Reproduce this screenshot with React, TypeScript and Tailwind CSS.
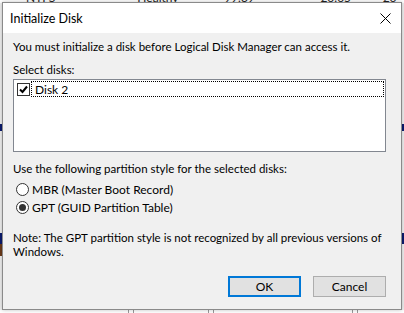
import { useState } from "react";

const FONT = "font-['Lato','Liberation_Sans',sans-serif]";

function CloseGlyph() {
  return (
    <svg width="11" height="11" viewBox="0 0 11 11">
      <path d="M0.5 0.5 L10.5 10.5 M10.5 0.5 L0.5 10.5" stroke="#000" strokeWidth="1" fill="none" />
    </svg>
  );
}

function Radio({ checked, label, onClick }: { checked: boolean; label: string; onClick: () => void }) {
  return (
    <div className="flex h-[18px] items-center pl-[3px]" onClick={onClick}>
      <span className="flex h-[13px] w-[13px] items-center justify-center rounded-full border border-[#333] bg-white">
        {checked && <span className="h-[7px] w-[7px] rounded-full bg-[#333]" />}
      </span>
      <span className="ml-[3px] leading-[15px]">{label}</span>
    </div>
  );
}

export default function App() {
  const [style, setStyle] = useState<"mbr" | "gpt">("gpt");
  const [checked, setChecked] = useState(true);

  return (
    <div className={`relative h-[313px] w-[404px] overflow-hidden bg-white text-black ${FONT}`}>
      {/* disk management window behind the dialog */}
      <div className="flex h-[3px] overflow-hidden text-[12px] text-[#222]">
        <span className="-mt-[10px] ml-[26px] leading-[15px]">NTFS</span>
        <span className="-mt-[10px] ml-[82px] leading-[15px]">Healthy (B...</span>
        <span className="-mt-[10px] ml-[36px] leading-[15px]">99.39 GB</span>
        <span className="-mt-[10px] ml-[56px] leading-[15px]">20.05 GB</span>
        <span className="-mt-[10px] ml-[22px] leading-[15px]">20 %</span>
      </div>
      <div className="flex h-[307px]">
        <div className="flex w-[2px] flex-col bg-[#f0f0f0]">
          <div className="h-[121px]" />
          <div className="h-[7px] bg-[#0a1a6e]" />
          <div className="h-[102px]" />
          <div className="h-[11px] bg-[#0a1a6e]" />
          <div className="h-[12px] bg-[#6b3a1a]" />
        </div>
        <div className="flex-1" />
        <div className="flex w-[2px] flex-col bg-[#f0f0f0]">
          <div className="h-[121px]" />
          <div className="h-[7px] bg-[#0a1a6e]" />
          <div className="h-[102px]" />
          <div className="h-[11px] bg-[#0a1a6e]" />
        </div>
      </div>
      <div className="flex h-[3px]">
        <div className="w-[128px]" />
        <div className="w-[1px] bg-[#999]" />
        <div className="w-[4px]" />
        <div className="w-[1px] bg-[#999]" />
        <div className="w-[74px]" />
        <div className="w-[1px] bg-[#999]" />
        <div className="w-[4px]" />
        <div className="w-[1px] bg-[#999]" />
        <div className="w-[138px]" />
        <div className="w-[1px] bg-[#999]" />
        <div className="w-[4px]" />
        <div className="w-[1px] bg-[#999]" />
      </div>

      {/* Initialize Disk dialog */}
      <div className="absolute left-[2px] top-[2px] flex h-[308px] w-[400px] flex-col border border-[#8a8a8a] bg-[#f0f0f0] shadow-[0_0_4px_rgba(0,0,0,0.25)]">
        <div className="flex h-[30px] items-center justify-between bg-white pl-[7px] pr-[10px]">
          <span className="text-[12.5px] leading-[15px]">Initialize Disk</span>
          <CloseGlyph />
        </div>

        <div className="flex flex-col pl-[10px] pr-[14px] text-[11.5px]">
          <div className="mt-[6px] h-[15px] whitespace-nowrap leading-[15px]">
            You must initialize a disk before Logical Disk Manager can access it.
          </div>
          <div className="mt-[8px] h-[15px] leading-[15px]">Select disks:</div>

          <div className="mt-[2px] h-[73px] w-[373px] border border-[#828790] bg-white p-[1px]">
            <div className="flex h-[16px] items-center" onClick={() => setChecked(!checked)}>
              <span className="ml-[2px] flex h-[13px] w-[13px] items-center justify-center border border-[#333] bg-white">
                {checked && (
                  <svg width="9" height="9" viewBox="0 0 9 9">
                    <path d="M1 4.5 L3.5 7 L8 1.5" stroke="#000" strokeWidth="2" fill="none" />
                  </svg>
                )}
              </span>
              <span className="ml-[1px] flex h-[16px] flex-1 items-center border border-dotted border-black pl-[3px] text-[12px] leading-[15px]">
                Disk 2
              </span>
            </div>
          </div>

          <div className="mt-[9px] h-[15px] whitespace-nowrap leading-[15px]">
            Use the following partition style for the selected disks:
          </div>
          <div className="mt-[4px] text-[12px]">
            <Radio checked={style === "mbr"} label="MBR (Master Boot Record)" onClick={() => setStyle("mbr")} />
            <Radio checked={style === "gpt"} label="GPT (GUID Partition Table)" onClick={() => setStyle("gpt")} />
          </div>

          <div className="mt-[15px] w-[374px] leading-[14px]">
            Note: The GPT partition style is not recognized by all previous versions of Windows.
          </div>

          <div className="mt-[17px] flex justify-end gap-[12px] pr-[1px]">
            <button className="h-[21px] w-[73px] border-2 border-[#0078d7] bg-[#e1e1e1] text-[12px] leading-[15px]">
              OK
            </button>
            <button className="h-[21px] w-[73px] border border-[#adadad] bg-[#e1e1e1] text-[12px] leading-[15px]">
              Cancel
            </button>
          </div>
        </div>
      </div>
    </div>
  );
}
